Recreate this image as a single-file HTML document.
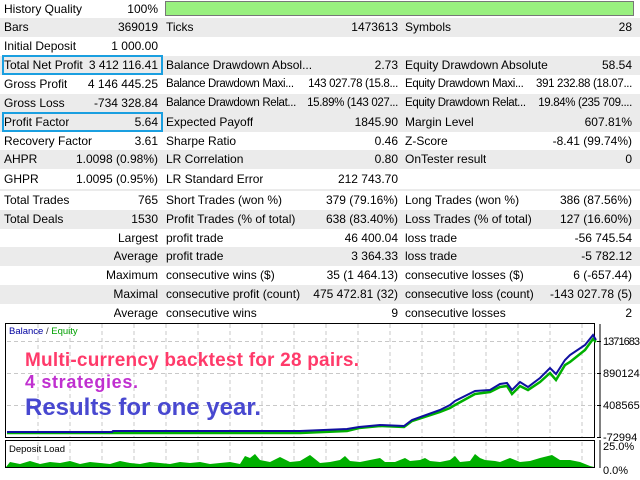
<!DOCTYPE html>
<html><head><meta charset="utf-8"><style>
*{margin:0;padding:0;box-sizing:border-box}
body{width:640px;height:480px;background:#fff;position:relative;overflow:hidden;font-family:"Liberation Sans",sans-serif;font-size:12px;color:#000}
.r{position:absolute;left:0;width:640px;height:19px;line-height:19px}
.g{background:#ebebeb}
.r span{position:absolute;white-space:nowrap;top:0;overflow:hidden}
.l1{left:4px}.v1{right:482px}.l2{left:166px;max-width:234px}.v2{right:242px}.l3{left:405px;max-width:232px}.v3{right:8px}
.s{font-size:11.5px;letter-spacing:-0.35px}
.box{position:absolute;left:2px;width:161px;height:20px;border:2px solid #1a9fe0}
</style></head><body>
<div class="r" style="top:0"><span class="l1">History Quality</span><span class="v1">100%</span></div>
<div style="position:absolute;left:165px;top:1px;width:469px;height:15px;background:#99f07f;border:1px solid #777"></div>
<div class="r g" style="top:18px"><span class="l1">Bars</span><span class="v1">369019</span><span class="l2">Ticks</span><span class="v2">1473613</span><span class="l3">Symbols</span><span class="v3">28</span></div>
<div class="r" style="top:37px"><span class="l1">Initial Deposit</span><span class="v1">1 000.00</span></div>
<div class="r g" style="top:56px"><span class="l1">Total Net Profit</span><span class="v1">3 412 116.41</span><span class="l2">Balance Drawdown Absol...</span><span class="v2">2.73</span><span class="l3">Equity Drawdown Absolute</span><span class="v3">58.54</span></div>
<div class="r" style="top:75px"><span class="l1">Gross Profit</span><span class="v1">4 146 445.25</span><span class="l2 s">Balance Drawdown Maxi...</span><span class="v2 s">143 027.78 (15.8...</span><span class="l3 s">Equity Drawdown Maxi...</span><span class="v3 s">391 232.88 (18.07...</span></div>
<div class="r g" style="top:94px"><span class="l1">Gross Loss</span><span class="v1">-734 328.84</span><span class="l2 s">Balance Drawdown Relat...</span><span class="v2 s">15.89% (143 027...</span><span class="l3 s">Equity Drawdown Relat...</span><span class="v3 s">19.84% (235 709....</span></div>
<div class="r g" style="top:113px"><span class="l1">Profit Factor</span><span class="v1">5.64</span><span class="l2">Expected Payoff</span><span class="v2">1845.90</span><span class="l3">Margin Level</span><span class="v3">607.81%</span></div>
<div class="r" style="top:132px"><span class="l1">Recovery Factor</span><span class="v1">3.61</span><span class="l2">Sharpe Ratio</span><span class="v2">0.46</span><span class="l3">Z-Score</span><span class="v3">-8.41 (99.74%)</span></div>
<div class="r g" style="top:150px"><span class="l1">AHPR</span><span class="v1">1.0098 (0.98%)</span><span class="l2">LR Correlation</span><span class="v2">0.80</span><span class="l3">OnTester result</span><span class="v3">0</span></div>
<div class="r" style="top:170px"><span class="l1">GHPR</span><span class="v1">1.0095 (0.95%)</span><span class="l2">LR Standard Error</span><span class="v2">212 743.70</span></div>
<div style="position:absolute;left:0;top:189px;width:640px;height:2px;background:#ebebeb"></div>
<div class="r" style="top:191px"><span class="l1">Total Trades</span><span class="v1">765</span><span class="l2">Short Trades (won %)</span><span class="v2">379 (79.16%)</span><span class="l3">Long Trades (won %)</span><span class="v3">386 (87.56%)</span></div>
<div class="r g" style="top:210px"><span class="l1">Total Deals</span><span class="v1">1530</span><span class="l2">Profit Trades (% of total)</span><span class="v2">638 (83.40%)</span><span class="l3">Loss Trades (% of total)</span><span class="v3">127 (16.60%)</span></div>
<div class="r" style="top:229px"><span class="v1">Largest</span><span class="l2">profit trade</span><span class="v2">46 400.04</span><span class="l3">loss trade</span><span class="v3">-56 745.54</span></div>
<div class="r g" style="top:247px"><span class="v1">Average</span><span class="l2">profit trade</span><span class="v2">3 364.33</span><span class="l3">loss trade</span><span class="v3">-5 782.12</span></div>
<div class="r" style="top:266px"><span class="v1">Maximum</span><span class="l2">consecutive wins ($)</span><span class="v2">35 (1 464.13)</span><span class="l3">consecutive losses ($)</span><span class="v3">6 (-657.44)</span></div>
<div class="r g" style="top:285px"><span class="v1">Maximal</span><span class="l2">consecutive profit (count)</span><span class="v2">475 472.81 (32)</span><span class="l3">consecutive loss (count)</span><span class="v3">-143 027.78 (5)</span></div>
<div class="r" style="top:304px"><span class="v1">Average</span><span class="l2">consecutive wins</span><span class="v2">9</span><span class="l3">consecutive losses</span><span class="v3">2</span></div>
<div class="box" style="top:55px"></div>
<div class="box" style="top:112px"></div>

<svg style="position:absolute;left:0;top:320px" width="640" height="160">
<g stroke="#c8c8c8" stroke-dasharray="4,3" stroke-width="1">
<path d="M38 4V117M70 4V117M102 4V117M134 4V117M166 4V117M198 4V117M230 4V117M262 4V117M294 4V117M326 4V117M358 4V117M390 4V117M422 4V117M454 4V117M486 4V117M518 4V117M550 4V117M582 4V117"/>
<path d="M7 21.5H596M7 53.5H596M7 85.5H596"/>
<path d="M38 122V147M70 122V147M102 122V147M134 122V147M166 122V147M198 122V147M230 122V147M262 122V147M294 122V147M326 122V147M358 122V147M390 122V147M422 122V147M454 122V147M486 122V147M518 122V147M550 122V147M582 122V147"/>
</g>
<rect x="5.5" y="3.5" width="589" height="114" fill="none" stroke="#000"/>
<rect x="5.5" y="120.5" width="589" height="27" fill="none" stroke="#000"/>
<path d="M600 4V118M600 120V148" stroke="#000"/>
<path d="M597 21.5H601M597 53.5H601M597 85.5H601M597 117.5H601" stroke="#000"/>
<polyline fill="none" stroke="#00b000" stroke-width="2.5" points="7,113 300,113 347,111 359,108 380,106 404,107 412,101 440,92 450,88 455,85 475,74 490,72 500,67 507,66 512,74 520,66 528,70 540,62 550,53 556,60 565,45 570,42 585,30 593,19 596,22"/>
<polyline fill="none" stroke="#1010a0" stroke-width="2" points="7,112 112,112 113,111 300,111 347,109 359,107 380,105 404,106 412,100 440,90 450,85 455,81 475,71 490,70 500,64 507,63 512,70 520,62 528,67 540,58 550,48 556,54 565,40 570,35 585,25 593,15 596,20"/>
<path fill="#00b000" d="M6 147 L10 142 L20 144 L30 141 L40 144 L50 142 L60 143 L70 141 L80 144 L90 142 L100 143 L110 144 L120 141 L130 143 L140 144 L150 142 L160 143 L170 144 L180 142 L190 143 L200 142 L210 144 L220 143 L230 142 L240 144 L245 136 L250 138 L255 134 L260 140 L270 142 L280 137 L290 142 L300 141 L310 135 L315 139 L320 143 L330 142 L340 140 L345 136 L350 141 L360 142 L370 140 L380 138 L385 142 L395 142 L405 138 L410 141 L420 140 L425 138 L430 141 L440 142 L450 140 L455 136 L460 142 L470 141 L475 134 L480 138 L485 140 L495 141 L500 142 L510 138 L520 142 L530 141 L540 138 L548 136 L552 135 L560 140 L570 140 L580 142 L590 146 L594 147 Z"/>
<text x="9" y="14" font-family="Liberation Sans,sans-serif" font-size="9.5"><tspan fill="#0000a0">Balance</tspan><tspan fill="#333"> / </tspan><tspan fill="#00a000">Equity</tspan></text>
<text x="9" y="132" font-family="Liberation Sans,sans-serif" font-size="9.5" fill="#000">Deposit Load</text>
<g font-family="Liberation Sans,sans-serif" font-weight="bold">
<text x="25" y="46" font-size="19" fill="#ff3a6a" textLength="334">Multi-currency backtest for 28 pairs.</text>
<text x="25" y="68" font-size="18" fill="#c030d0" textLength="113">4 strategies.</text>
<text x="25" y="95" font-size="24" fill="#4848d0" textLength="236">Results for one year.</text>
</g>
<g font-family="Liberation Sans,sans-serif" font-size="11" fill="#000">
<text x="603" y="25" textLength="37">1371683</text>
<text x="603" y="57">890124</text>
<text x="603" y="89">408565</text>
<text x="603" y="121">-72994</text>
<text x="603" y="130">25.0%</text>
<text x="603" y="154">0.0%</text>
</g>
</svg>
</body></html>
